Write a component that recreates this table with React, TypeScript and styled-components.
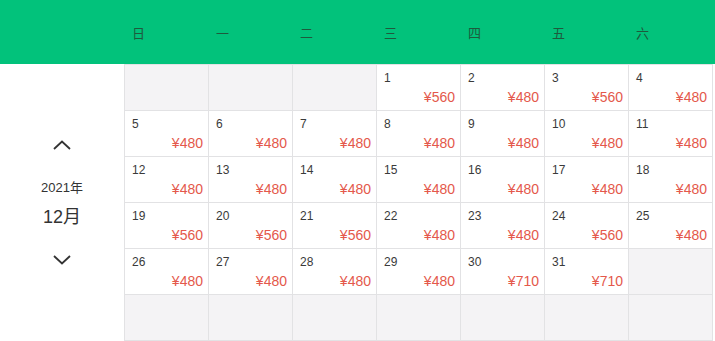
import styled, { createGlobalStyle } from 'styled-components';

const GlobalStyle = createGlobalStyle`
  html, body {
    margin: 0;
    padding: 0;
    background: #ffffff;
  }
  body {
    font-family: "Liberation Sans", "Noto Sans CJK SC", sans-serif;
    color: #333333;
  }
`;

const weekDays = ['日', '一', '二', '三', '四', '五', '六'];

// 2021年12月 starts on Wednesday
const prices: Record<number, number> = {
  1: 560, 2: 480, 3: 560, 4: 480,
  5: 480, 6: 480, 7: 480, 8: 480, 9: 480, 10: 480, 11: 480,
  12: 480, 13: 480, 14: 480, 15: 480, 16: 480, 17: 480, 18: 480,
  19: 560, 20: 560, 21: 560, 22: 480, 23: 480, 24: 560, 25: 480,
  26: 480, 27: 480, 28: 480, 29: 480, 30: 710, 31: 710,
};

const Page = styled.div`
  width: 715px;
  height: 341px;
  overflow: hidden;
  display: flex;
  flex-direction: column;
`;

const Header = styled.div`
  height: 64px;
  background: #02c27b;
  display: grid;
  grid-template-columns: 124px repeat(7, 84px);
  align-items: center;
`;

const WeekLabel = styled.div`
  padding-left: 8px;
  font-size: 13px;
  color: #1e5a3d;
`;

const Body = styled.div`
  display: flex;
`;

const Sidebar = styled.div`
  width: 124px;
  display: flex;
  flex-direction: column;
  align-items: center;
  padding-top: 75px;
`;

const ArrowButton = styled.button<{ $gap: number }>`
  border: none;
  background: transparent;
  padding: 0;
  margin-top: ${(p) => p.$gap}px;
  width: 20px;
  height: 12px;
  display: flex;
  align-items: center;
  justify-content: center;
  cursor: pointer;
`;

const YearText = styled.div`
  margin-top: 29px;
  font-size: 13px;
  line-height: 16px;
  color: #333333;
`;

const MonthText = styled.div`
  margin-top: 10px;
  font-size: 18px;
  line-height: 22px;
  color: #333333;
`;

const Grid = styled.div`
  display: grid;
  grid-template-columns: repeat(7, 84px);
  grid-auto-rows: 46px;
  border-left: 1px solid #e2e2e4;
  border-top: 1px solid #e2e2e4;
`;

const Cell = styled.div<{ $empty?: boolean }>`
  box-sizing: border-box;
  border-right: 1px solid #e2e2e4;
  border-bottom: 1px solid #e2e2e4;
  background: ${(p) => (p.$empty ? '#f4f3f5' : '#ffffff')};
  display: flex;
  flex-direction: column;
  padding: 6px 5px 0 7px;
`;

const DayNum = styled.div`
  font-size: 12px;
  line-height: 14px;
  color: #3a3a3a;
`;

const Price = styled.div`
  margin-top: 4px;
  text-align: right;
  font-size: 14px;
  line-height: 17px;
  color: #e4584b;
`;

const Chevron = ({ up }: { up?: boolean }) => (
  <svg width="18" height="10" viewBox="0 0 18 10">
    <polyline
      points={up ? '1,9 9,1.5 17,9' : '1,1 9,8.5 17,1'}
      fill="none"
      stroke="#333333"
      strokeWidth="1.8"
    />
  </svg>
);

export default function App() {
  const cells: (number | null)[] = [];
  for (let i = 0; i < 3; i++) cells.push(null);
  for (let d = 1; d <= 31; d++) cells.push(d);
  while (cells.length < 42) cells.push(null);

  return (
    <Page>
      <GlobalStyle />
      <Header>
        <div />
        {weekDays.map((w) => (
          <WeekLabel key={w}>{w}</WeekLabel>
        ))}
      </Header>
      <Body>
        <Sidebar>
          <ArrowButton $gap={0}>
            <Chevron up />
          </ArrowButton>
          <YearText>2021年</YearText>
          <MonthText>12月</MonthText>
          <ArrowButton $gap={26}>
            <Chevron />
          </ArrowButton>
        </Sidebar>
        <Grid>
          {cells.map((d, i) =>
            d === null ? (
              <Cell key={i} $empty />
            ) : (
              <Cell key={i}>
                <DayNum>{d}</DayNum>
                <Price>¥{prices[d]}</Price>
              </Cell>
            )
          )}
        </Grid>
      </Body>
    </Page>
  );
}
